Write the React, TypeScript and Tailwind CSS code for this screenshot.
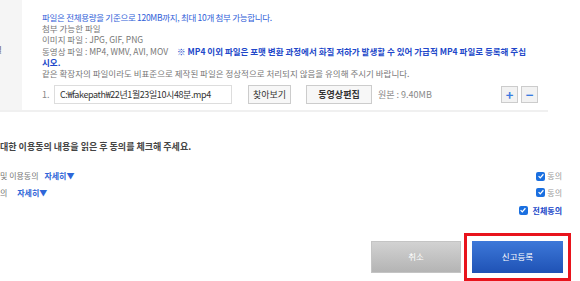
import React from "react";

const FONT = { fontFamily: '"Noto Sans CJK KR", "Noto Sans", sans-serif' };

function Check() {
  return (
    <span className="inline-flex w-[9px] h-[9px] rounded-[2px] bg-[#1a6fe0] items-center justify-center">
      <svg viewBox="0 0 10 10" className="w-[8px] h-[8px]">
        <path d="M2 5.2 4.1 7.3 8 2.8" fill="none" stroke="#fff" strokeWidth={1.6} />
      </svg>
    </span>
  );
}

export default function App() {
  return (
    <div className="w-[580px] h-[281px] bg-white overflow-hidden text-[8.5px] leading-[11.2px]" style={FONT}>
      {/* 첨부 파일 영역 */}
      <div className="flex w-[548px] border-b-2 border-[#f0f0f0]">
        <div className="w-[22px] bg-[#f5f5f5] overflow-hidden pt-[44px]">
          <span className="block -ml-[6px] text-[#555]">일</span>
        </div>
        <div className="flex-1 pl-[20px] pt-[12px] pb-[6px]">
          <p className="text-[#3060d8] tracking-[-0.3px]">파일은 전체용량을 기준으로 120MB까지, 최대 10개 첨부 가능합니다.</p>
          <p className="text-[#777]">첨부 가능한 파일</p>
          <p className="text-[#777]">이미지 파일 : JPG, GIF, PNG</p>
          <p className="text-[#777] whitespace-nowrap">
            동영상 파일 : MP4, WMV, AVI, MOV
            <b className="text-[#2147c9] ml-[9px]">
              ※ MP4 이외 파일은 포맷 변환 과정에서 화질 저하가 발생할 수 있어 가급적 MP4 파일로 등록해 주십
            </b>
          </p>
          <p className="text-[#2147c9] font-bold">시오.</p>
          <p className="text-[#777]">같은 확장자의 파일이라도 비표준으로 제작된 파일은 정상적으로 처리되지 않음을 유의해 주시기 바랍니다.</p>

          <div className="flex items-center mt-[6px] text-[9px]">
            <span className="text-[#888] w-[12px]">1.</span>
            <div className="w-[178px] h-[19px] border border-[#ddd] flex items-center px-[5px] text-[#333] tracking-[-0.4px]">
              C:₩fakepath₩22년1월23일10시48분.mp4
            </div>
            <button className="ml-[16px] h-[19px] w-[43px] border border-[#ccc] bg-[#f7f7f7] text-[#333]">찾아보기</button>
            <button className="ml-[15px] h-[19px] w-[66px] border border-[#ccc] bg-[#f7f7f7] text-[#333] font-bold">동영상편집</button>
            <span className="ml-[6px] text-[#888]">원본 : 9.40MB</span>
            <button className="ml-auto h-[17px] w-[17px] border border-[#ccc] bg-[#f2f2f2] text-[#3a7be0] text-[13px] leading-none font-bold">+</button>
            <button className="ml-[3px] mr-[10px] h-[17px] w-[17px] border border-[#ccc] bg-[#f2f2f2] text-[#3a7be0] text-[13px] leading-none font-bold">−</button>
          </div>
        </div>
      </div>

      {/* 이용동의 */}
      <div className="w-[562px] pt-[29px]">
        <p className="text-[#444] font-bold text-[9px]">대한 이용동의 내용을 읽은 후 동의를 체크해 주세요.</p>
        <div className="flex items-center justify-between mt-[18px] text-[8px]">
          <span className="text-[#777]">
            및 이용동의 <span className="ml-[4px] text-[#2f66d8] font-bold">자세히▼</span>
          </span>
          <span className="flex items-center gap-[2px] text-[#999]"><Check />동의</span>
        </div>
        <div className="flex items-center justify-between mt-[5px] text-[8px]">
          <span className="text-[#777]">
            의 <span className="ml-[8px] text-[#2f66d8] font-bold">자세히▼</span>
          </span>
          <span className="flex items-center gap-[2px] text-[#999]"><Check />동의</span>
        </div>
        <div className="flex items-center justify-end mt-[7px] text-[8px]">
          <span className="flex items-center gap-[5px] text-[#2147c9] font-bold"><Check />전체동의</span>
        </div>

        <div className="flex justify-end items-center gap-[3px] mt-[17px]">
          <button className="w-[90px] h-[32px] bg-gradient-to-b from-[#d2d2d2] to-[#b4b4b4] border border-[#c4c4c4] text-white">취소</button>
          <div className="border-[3px] border-[#e8141c] p-[5px] -mr-[9px]">
            <button className="block w-[91px] h-[32px] bg-gradient-to-b from-[#3d78d9] to-[#1f52b5] text-white">신고등록</button>
          </div>
        </div>
      </div>
    </div>
  );
}
